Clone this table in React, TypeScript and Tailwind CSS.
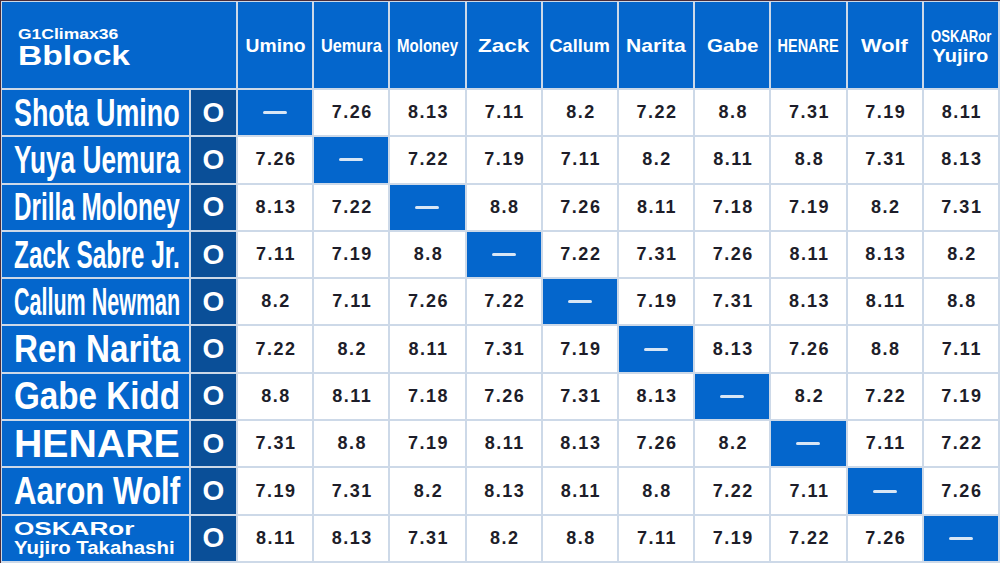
import React from "react";

const font = { fontFamily: '"Liberation Sans", Arial, sans-serif' };

const headers = [
  { label: "Umino", w: 60 },
  { label: "Uemura", w: 61 },
  { label: "Moloney", w: 61 },
  { label: "Zack", w: 51 },
  { label: "Callum", w: 60 },
  { label: "Narita", w: 60 },
  { label: "Gabe", w: 52 },
  { label: "HENARE", w: 61 },
  { label: "Wolf", w: 47 },
];

const names = [
  "Shota Umino",
  "Yuya Uemura",
  "Drilla Moloney",
  "Zack Sabre Jr.",
  "Callum Newman",
  "Ren Narita",
  "Gabe Kidd",
  "HENARE",
  "Aaron Wolf",
];

const dates = [
  ["", "7.26", "8.13", "7.11", "8.2", "7.22", "8.8", "7.31", "7.19", "8.11"],
  ["7.26", "", "7.22", "7.19", "7.11", "8.2", "8.11", "8.8", "7.31", "8.13"],
  ["8.13", "7.22", "", "8.8", "7.26", "8.11", "7.18", "7.19", "8.2", "7.31"],
  ["7.11", "7.19", "8.8", "", "7.22", "7.31", "7.26", "8.11", "8.13", "8.2"],
  ["8.2", "7.11", "7.26", "7.22", "", "7.19", "7.31", "8.13", "8.11", "8.8"],
  ["7.22", "8.2", "8.11", "7.31", "7.19", "", "8.13", "7.26", "8.8", "7.11"],
  ["8.8", "8.11", "7.18", "7.26", "7.31", "8.13", "", "8.2", "7.22", "7.19"],
  ["7.31", "8.8", "7.19", "8.11", "8.13", "7.26", "8.2", "", "7.11", "7.22"],
  ["7.19", "7.31", "8.2", "8.13", "8.11", "8.8", "7.22", "7.11", "", "7.26"],
  ["8.11", "8.13", "7.31", "8.2", "8.8", "7.11", "7.19", "7.22", "7.26", ""],
];

// squeezes / stretches a line of text so it takes exactly `width` px
function FitText({ text, width, className = "", left = false }) {
  const ref = React.useRef(null);
  const [scale, setScale] = React.useState(1);

  React.useLayoutEffect(() => {
    const measure = () => {
      if (ref.current) setScale(width / ref.current.offsetWidth);
    };
    measure();
    document.fonts?.ready.then(measure);
  }, [text, width]);

  return (
    <span
      ref={ref}
      className={`inline-block whitespace-nowrap ${left ? "origin-left" : "origin-center"} ${className}`}
      style={{ transform: `scaleX(${scale})` }}
    >
      {text}
    </span>
  );
}

function DateCell({ value }) {
  if (!value) {
    return (
      <div className="bg-[#0466cc] flex items-center justify-center">
        <div className="w-[24px] h-[3px] bg-[#d8e6f5] rounded-full" />
      </div>
    );
  }
  return (
    <div className="bg-white flex items-center justify-center text-[18px] font-bold tracking-[1.5px] pl-[2px] text-[#1d1d29]">
      {value}
    </div>
  );
}

function App() {
  return (
    <div className="w-[1000px] h-[563px] bg-[#4a2c38] pt-[1px] pl-[1px] overflow-hidden" style={font}>
      <div className="w-full h-full bg-[#cdd9e8] grid grid-cols-[187px_45px_repeat(10,minmax(0,1fr))] grid-rows-[86px_repeat(10,minmax(0,1fr))] gap-[2px] p-[1px] pb-[2px] pr-[2px]">
        <div className="col-span-2 bg-[#0466cc] text-white font-bold flex flex-col justify-center pl-[16px] pt-[5px]">
          <div className="leading-[16px] text-[14px]">
            <FitText text="G1Climax36" width={100} left />
          </div>
          <div className="leading-[28px] text-[27px]">
            <FitText text="Bblock" width={112} left />
          </div>
        </div>
        {headers.map((h) => (
          <div key={h.label} className="bg-[#0466cc] text-white font-bold text-[19px] flex items-center justify-center pt-[3px] overflow-hidden">
            <FitText text={h.label} width={h.w} />
          </div>
        ))}
        <div className="bg-[#0466cc] text-white font-bold flex flex-col items-center justify-center pt-[3px] overflow-hidden">
          <div className="text-[17px] leading-[18px]">
            <FitText text="OSKARor" width={60} />
          </div>
          <div className="text-[19px] leading-[20px]">
            <FitText text="Yujiro" width={56} />
          </div>
        </div>

        {dates.map((row, i) => (
          <React.Fragment key={`row-${i}`}>
            <div className="bg-[#0466cc] text-white font-bold flex flex-col justify-center pl-[12px] overflow-hidden">
              {i < 9 ? (
                <div className="text-[39px] leading-[40px]">
                  <FitText text={names[i]} width={166} left />
                </div>
              ) : (
                <>
                  <div className="text-[19px] leading-[19px]">
                    <FitText text="OSKARor" width={121} left />
                  </div>
                  <div className="text-[19px] leading-[19px]">
                    <FitText text="Yujiro Takahashi" width={161} left />
                  </div>
                </>
              )}
            </div>
            <div className="bg-[#0a4f98] text-white font-bold text-[28px] flex items-center justify-center">
              O
            </div>
            {row.map((d, j) => (
              <DateCell key={`cell-${i}-${j}`} value={d} />
            ))}
          </React.Fragment>
        ))}
      </div>
    </div>
  );
}

export default App;
